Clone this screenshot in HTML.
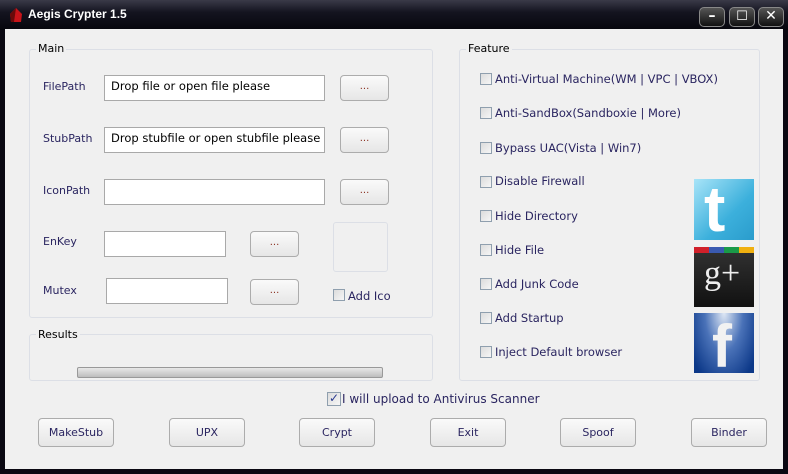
<!DOCTYPE html>
<html><head><style>
*{margin:0;padding:0;box-sizing:border-box}
body{width:788px;height:474px;background:#0a0812;position:relative;overflow:hidden;font-family:"DejaVu Sans","Liberation Sans",sans-serif;font-size:11px;color:#2a2560}
.a{position:absolute;white-space:nowrap}
#title{left:0;top:0;width:788px;height:30px;background:linear-gradient(#3a3a48,#141420 40%,#06060c)}
#client{left:5px;top:29px;width:778px;height:440px;background:#f0f0f0}
.grp{border:1px solid #dcdfe6;border-radius:3px}
.lg{background:#f0f0f0;padding:0 2px;color:#000}
.tb{background:#fff;border:1px solid #a9a9a9;padding:3px 6px;font-size:11.5px;color:#000;overflow:hidden}
.btn{border:1px solid #acacac;border-radius:4px;background:linear-gradient(#fafafa,#e6e6e6);text-align:center;font-size:11px}
.dots{color:#8a3020;line-height:22px;font-size:10px}
.cb{width:12px;height:12px;border:1px solid #8f9fae;background:linear-gradient(135deg,#dcdcdc,#f6f6f6)}
.ft{font-size:11.5px}
.wb{top:7px;height:20px;border:1px solid #888;border-radius:5px;background:linear-gradient(#555,#111);color:#fff;text-align:center;font-weight:bold;font-size:14px;line-height:17px}
.bb{height:29px;line-height:27px;top:418px;width:76px}
</style></head><body>
<div class="a" id="title"></div>
<svg class="a" style="left:9px;top:7px" width="14" height="16"><path d="M7 1 L13 7 L12 15 L2 15 L1 7Z" fill="#c8141a"/><path d="M7 1 L1 7 L2 15 L5 15Z" fill="#6a0a0a"/></svg>
<div class="a" style="left:28px;top:7px;color:#fff;font-weight:bold;font-size:12px;font-family:'Liberation Sans',sans-serif">Aegis Crypter 1.5</div>
<div class="a wb" style="left:699px;width:26px">–</div>
<div class="a wb" style="left:729px;width:26px;font-size:13px">☐</div>
<div class="a wb" style="left:758px;width:26px">✕</div>
<div class="a" id="client"></div>

<div class="a grp" style="left:29px;top:49px;width:404px;height:269px"></div>
<div class="a lg" style="left:36px;top:42px">Main</div>
<div class="a" style="left:43px;top:80px">FilePath</div>
<div class="a tb" style="left:104px;top:75px;width:221px;height:26px">Drop file or open file please</div>
<div class="a btn dots" style="left:340px;top:75px;width:49px;height:26px">...</div>
<div class="a" style="left:43px;top:132px">StubPath</div>
<div class="a tb" style="left:104px;top:127px;width:221px;height:26px">Drop stubfile or open stubfile please</div>
<div class="a btn dots" style="left:340px;top:127px;width:49px;height:26px">...</div>
<div class="a" style="left:43px;top:184px">IconPath</div>
<div class="a tb" style="left:104px;top:179px;width:221px;height:26px"></div>
<div class="a btn dots" style="left:340px;top:179px;width:49px;height:26px">...</div>
<div class="a" style="left:43px;top:235px">EnKey</div>
<div class="a tb" style="left:104px;top:231px;width:122px;height:26px"></div>
<div class="a btn dots" style="left:250px;top:231px;width:49px;height:26px">...</div>
<div class="a" style="left:333px;top:222px;width:55px;height:50px;border:1px solid #dcdfe6;border-radius:3px"></div>
<div class="a" style="left:43px;top:284px">Mutex</div>
<div class="a tb" style="left:106px;top:278px;width:122px;height:26px"></div>
<div class="a btn dots" style="left:250px;top:279px;width:49px;height:26px">...</div>
<div class="a cb" style="left:333px;top:289px"></div>
<div class="a ft" style="left:348px;top:289px">Add Ico</div>

<div class="a grp" style="left:29px;top:334px;width:404px;height:47px"></div>
<div class="a lg" style="left:36px;top:328px">Results</div>
<div class="a" style="left:77px;top:367px;width:306px;height:11px;border:1px solid #999;border-radius:2px;background:linear-gradient(#e8e8e8,#bdbdbd)"></div>

<div class="a grp" style="left:459px;top:49px;width:301px;height:332px"></div>
<div class="a lg" style="left:466px;top:42px">Feature</div>
<div class="a cb" style="left:480px;top:73px"></div><div class="a ft" style="left:495px;top:72px">Anti-Virtual Machine(WM | VPC | VBOX)</div>
<div class="a cb" style="left:480px;top:107px"></div><div class="a ft" style="left:495px;top:106px">Anti-SandBox(Sandboxie | More)</div>
<div class="a cb" style="left:480px;top:142px"></div><div class="a ft" style="left:495px;top:141px">Bypass UAC(Vista | Win7)</div>
<div class="a cb" style="left:480px;top:176px"></div><div class="a ft" style="left:495px;top:174px">Disable Firewall</div>
<div class="a cb" style="left:480px;top:210px"></div><div class="a ft" style="left:495px;top:209px">Hide Directory</div>
<div class="a cb" style="left:480px;top:244px"></div><div class="a ft" style="left:495px;top:243px">Hide File</div>
<div class="a cb" style="left:480px;top:278px"></div><div class="a ft" style="left:495px;top:277px">Add Junk Code</div>
<div class="a cb" style="left:480px;top:312px"></div><div class="a ft" style="left:495px;top:311px">Add Startup</div>
<div class="a cb" style="left:480px;top:346px"></div><div class="a ft" style="left:495px;top:345px">Inject Default browser</div>

<div class="a" style="left:694px;top:179px;width:60px;height:61px;background:linear-gradient(135deg,#a8e4f8,#3cb0dc 60%,#2a9ccc);overflow:hidden"><div class="a" style="left:10px;top:0;font:bold 64px 'Liberation Sans',sans-serif;color:#fff;line-height:60px">t</div></div>
<div class="a" style="left:694px;top:247px;width:60px;height:60px;background:linear-gradient(#333,#111)"><div class="a" style="left:0;top:0;width:60px;height:6px;background:linear-gradient(90deg,#d0202a 25%,#3a5ab0 25%,#3a5ab0 50%,#1a9a48 50%,#1a9a48 75%,#f0b010 75%)"></div><div class="a" style="left:10px;top:8px;color:#eee;font:34px 'Liberation Serif',serif">g+</div></div>
<div class="a" style="left:694px;top:313px;width:60px;height:60px;background:radial-gradient(ellipse at 50% 0%,#dfe8f5,#4a72b8 45%,#0c3888 90%);overflow:hidden"><div class="a" style="left:18px;top:4px;color:#f2f2f2;font:bold 60px 'Liberation Sans',sans-serif;line-height:60px">f</div></div>

<div class="a cb" style="left:327px;top:392px;width:14px;height:14px;color:#2a3a90;font-size:12px;line-height:11px;text-align:center;font-weight:bold">✓</div>
<div class="a" style="left:342px;top:392px;font-size:12px">I will upload to Antivirus Scanner</div>

<div class="a btn bb" style="left:38px">MakeStub</div>
<div class="a btn bb" style="left:169px">UPX</div>
<div class="a btn bb" style="left:299px">Crypt</div>
<div class="a btn bb" style="left:430px">Exit</div>
<div class="a btn bb" style="left:560px">Spoof</div>
<div class="a btn bb" style="left:691px">Binder</div>
</body></html>
